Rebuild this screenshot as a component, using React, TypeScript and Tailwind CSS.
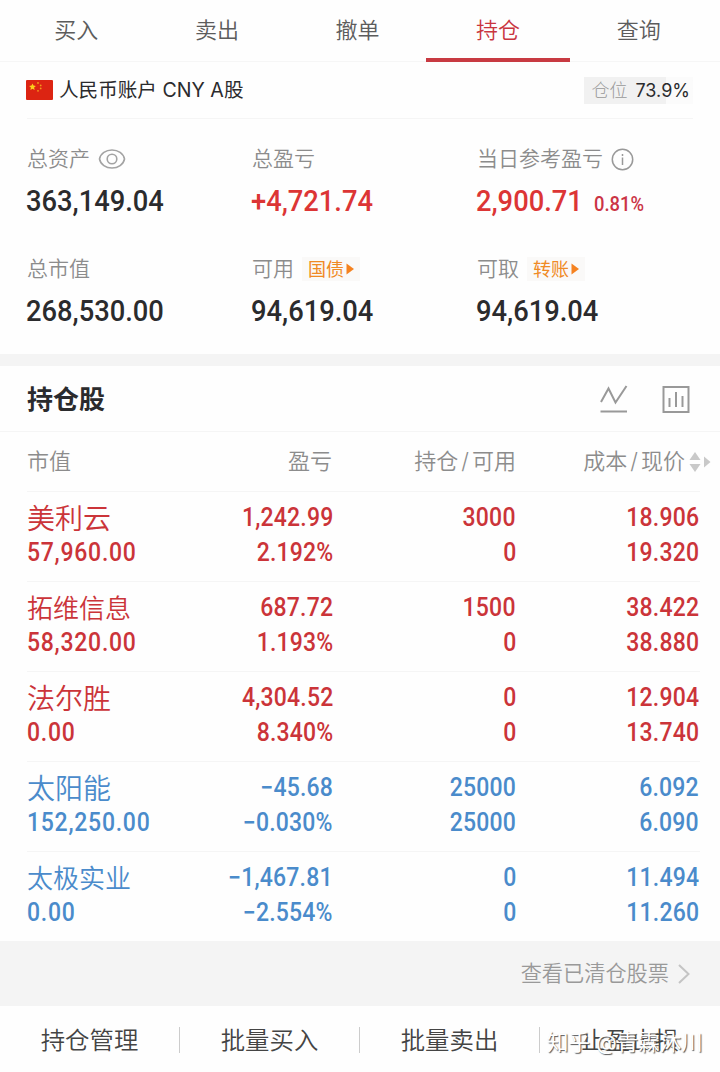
const tabs = ['买入', '卖出', '撤单', '持仓', '查询']

const holdings = [
  { name: '美利云', value: '57,960.00', profit: '1,242.99', rate: '2.192%', amount: '3000', usable: '0', cost: '18.906', price: '19.320', up: true },
  { name: '拓维信息', value: '58,320.00', profit: '687.72', rate: '1.193%', amount: '1500', usable: '0', cost: '38.422', price: '38.880', up: true },
  { name: '法尔胜', value: '0.00', profit: '4,304.52', rate: '8.340%', amount: '0', usable: '0', cost: '12.904', price: '13.740', up: true },
  { name: '太阳能', value: '152,250.00', profit: '−45.68', rate: '−0.030%', amount: '25000', usable: '25000', cost: '6.092', price: '6.090', up: false },
  { name: '太极实业', value: '0.00', profit: '−1,467.81', rate: '−2.554%', amount: '0', usable: '0', cost: '11.494', price: '11.260', up: false },
]

const actions = ['持仓管理', '批量买入', '批量卖出', '止盈止损']

function Flag() {
  return (
    <svg width="27" height="20" viewBox="0 0 27 20">
      <rect width="27" height="20" rx="1" fill="#dc2412" />
      <path
        d="M6.500 3.400l1 2.200 2.400.3-1.800 1.600.5 2.400-2.100-1.200-2.100 1.200.5-2.400-1.800-1.600 2.400-.3z"
        fill="#fbd01c"
      />
      <g fill="#f29a1c">
        <circle cx="12" cy="3" r="0.9" />
        <circle cx="14.7" cy="5.4" r="0.9" />
        <circle cx="14.7" cy="8.4" r="0.9" />
        <circle cx="12" cy="10.8" r="0.9" />
      </g>
    </svg>
  )
}

function EyeIcon() {
  return (
    <svg className="ml-2" width="28" height="20" viewBox="0 0 28 20" fill="none" stroke="#a3a3a3" strokeWidth="1.6">
      <path d="M1.500 10C2.500 4.500 8 1 14 1s11.500 3.500 12.500 9c-1 5.500-6.500 9-12.500 9S2.500 15.500 1.500 10z" />
      <circle cx="14" cy="10" r="4.800" />
    </svg>
  )
}

function InfoIcon() {
  return (
    <svg className="ml-2" width="23" height="23" viewBox="0 0 23 23" fill="none" stroke="#999" strokeWidth="1.5">
      <circle cx="11.500" cy="11.500" r="10.200" />
      <path d="M11.500 9.500v7.500" />
      <path d="M11.500 6v2" />
    </svg>
  )
}

function Chip({ text }: { text: string }) {
  return (
    <span className="ml-2 flex h-6 items-center gap-0.5 bg-[#faf9f8] px-1.5 text-[18px] font-normal text-[#f08a24]">
      {text}
      <svg width="8" height="12" viewBox="0 0 8 12">
        <path d="M0.500 0.500L8 6 0.500 11.500z" fill="#f58220" />
      </svg>
    </span>
  )
}

function Stat({ label, value, extra, note, red }: {
  label: string
  value: string
  extra?: React.ReactNode
  note?: string
  red?: boolean
}) {
  return (
    <div className="h-[110px]">
      <div className="flex h-[30px] items-center text-[21px] font-[350] text-[#8c8c8c]">
        {label}
        {extra}
      </div>
      <div
        className={`mt-[9px] -ml-px flex h-9 items-baseline font-[Roboto] text-[30px] leading-9 font-medium ${
          red ? 'text-[#dc3535]' : 'text-[#2b2b2d]'
        }`}
      >
        <span className="inline-block origin-left scale-x-[0.91]">{value}</span>
        {note && (
          <span className="ml-px inline-block origin-left scale-x-[0.92] text-[20px] text-[#cb3445]">{note}</span>
        )}
      </div>
    </div>
  )
}

function Num({ children }: { children: string }) {
  return (
    <span className="text-right">
      <span className="inline-block origin-right scale-x-[0.92] tracking-[0.2px]">{children}</span>
    </span>
  )
}

export default function App() {
  return (
    <div className="relative h-[1072px] w-[720px] overflow-hidden bg-[#fefefe] font-['Inter','Noto_Sans_CJK_SC',sans-serif] text-[#2b2b2d]">
      {/* 顶部标签 */}
      <nav className="flex h-[62px] border-b border-[#f6f6f6] pr-[11px] pl-[6px]">
        {tabs.map((tab) => (
          <div
            key={tab}
            className={`relative flex flex-1 justify-center pt-[14px] text-[22px] leading-8 font-[350] ${
              tab === '持仓' ? 'text-[#c9353f]' : 'text-[#5c5c5c]'
            }`}
          >
            {tab}
            {tab === '持仓' && <span className="absolute -inset-x-0.5 bottom-[-1px] h-1 bg-[#c83a42]" />}
          </div>
        ))}
      </nav>

      {/* 账户 */}
      <div className="mx-[27px] flex h-[57px] items-center justify-between border-b border-[#f5f5f5]">
        <div className="-ml-px flex items-center gap-1.5 text-[19.6px]">
          <Flag />
          <span className="relative top-px">人民币账户 CNY A股</span>
        </div>
        <div className="flex h-[27px] items-center gap-2 bg-linear-to-r from-[#f1f1f1] from-75% to-[#fbfbfb] to-75% pr-[3px] pl-[7px] text-[18px]">
          <span className="font-light text-[#999]">仓位</span>
          <span>73.9%</span>
        </div>
      </div>

      {/* 资产汇总 */}
      <section className="grid h-[235px] grid-cols-[225px_225px_1fr] content-start pt-[25px] pl-[27px]">
        <Stat label="总资产" value="363,149.04" extra={<EyeIcon />} />
        <Stat label="总盈亏" value="+4,721.74" red />
        <Stat label="当日参考盈亏" value="2,900.71" note="0.81%" extra={<InfoIcon />} red />
        <Stat label="总市值" value="268,530.00" />
        <Stat label="可用" value="94,619.04" extra={<Chip text="国债" />} />
        <Stat label="可取" value="94,619.04" extra={<Chip text="转账" />} />
      </section>

      <div className="h-3 bg-[#f4f4f4]" />

      {/* 持仓股 */}
      <header className="flex h-[66px] items-center justify-between border-b border-[#f5f5f5] pr-[30px] pl-[27px]">
        <h2 className="pt-0.5 text-[26px] font-bold">持仓股</h2>
        <div className="flex gap-[34px]">
          <svg width="28" height="28" viewBox="0 0 28 28" fill="none" stroke="#999" strokeWidth="2">
            <path d="M1 17L8.500 3.500l7 14L26.500 1" />
            <path d="M0.500 26.500h26.500" />
          </svg>
          <svg width="28" height="28" viewBox="0 0 28 28" fill="none" stroke="#999" strokeWidth="2">
            <rect x="1.500" y="2" width="25" height="25" />
            <path d="M7.500 13v9M14 7v15M20.500 11v11" />
          </svg>
        </div>
      </header>

      <div className="flex h-[59px] items-center pl-[27px] text-[22px] font-[350] text-[#8c8c8c]">
        <span className="w-[120px]">市值</span>
        <span className="w-[185px] text-right">盈亏</span>
        <span className="w-[184px] text-right">持仓<span className="mx-[3px]">/</span>可用</span>
        <span className="w-[169px] text-right">成本<span className="mx-[3px]">/</span>现价</span>
        <svg className="ml-1" width="22" height="22" viewBox="0 0 22 22" fill="#c9c9c9">
          <path d="M6 1L11.500 9H0.500zM6 21L11.500 13H0.500zM15 5.500L21.500 11 15 16.500z" />
        </svg>
      </div>

      <div className="pl-[27px]">
        {holdings.map((h) => (
          <div
            key={h.name}
            className={`mr-[20px] grid h-[90px] grid-cols-[125px_181px_183px_183px] content-start border-t border-[#f5f5f5] pt-2 font-[Roboto,'Noto_Sans_CJK_SC',sans-serif] text-[25px] leading-[35px] font-medium ${
              h.up ? 'text-[#cb3439]' : 'text-[#4a8bcb]'
            }`}
          >
            <span className={`relative top-0.5 h-[35px] font-[350] ${h.name.length > 3 ? 'text-[26px]' : 'text-[28px]'}`}>
              {h.name}
            </span>
            <Num>{h.profit}</Num>
            <Num>{h.amount}</Num>
            <Num>{h.cost}</Num>
            <span>
              <span className="inline-block origin-left scale-x-[0.92] tracking-[0.8px]">{h.value}</span>
            </span>
            <Num>{h.rate}</Num>
            <Num>{h.usable}</Num>
            <Num>{h.price}</Num>
          </div>
        ))}
      </div>

      <div className="flex h-[65px] items-center justify-end gap-2 bg-[#f4f4f4] pr-[29px] text-[21.200px] font-[350] text-[#999]">
        <span className="pt-px">查看已清仓股票</span>
        <svg width="14" height="22" viewBox="0 0 14 22" fill="none" stroke="#c4c4c4" strokeWidth="2">
          <path d="M2 2l9.500 9L2 20" />
        </svg>
      </div>

      {/* 底部操作 */}
      <footer className="flex h-[67px] items-center">
        {actions.map((action, i) => (
          <div
            key={action}
            className={`flex h-[26px] w-[180px] items-center justify-center pt-px text-[24.400px] font-[350] text-[#444] ${
              i < actions.length - 1 ? 'border-r border-[#ccc]' : ''
            }`}
          >
            {action}
          </div>
        ))}
      </footer>

      <span className="absolute top-[1026px] left-[547px] text-[21.500px] leading-8 whitespace-nowrap text-white [text-shadow:1px_1px_1px_#555]">
        知乎 @青霖沐川
      </span>
    </div>
  )
}
